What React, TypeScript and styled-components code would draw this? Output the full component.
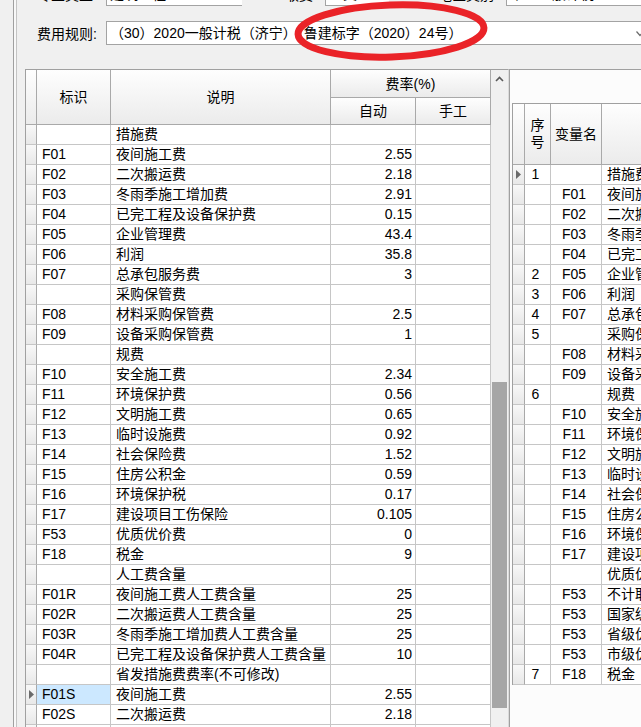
import React from "react";
import styled, { createGlobalStyle } from "styled-components";

const GlobalStyle = createGlobalStyle`
  html, body {
    margin: 0;
    padding: 0;
    background: #f0f0f0;
    overflow: hidden;
  }
  body {
    font-family: "Liberation Sans", "Noto Sans CJK SC", sans-serif;
    font-size: 14px;
    color: #000;
  }
`;

type FeeRow = { id: string; name: string; auto: string; selected?: boolean };
type VarRow = { no: string; code: string; desc: string; current?: boolean };

const feeRows: FeeRow[] = [
  { id: "", name: "措施费", auto: "" },
  { id: "F01", name: "夜间施工费", auto: "2.55" },
  { id: "F02", name: "二次搬运费", auto: "2.18" },
  { id: "F03", name: "冬雨季施工增加费", auto: "2.91" },
  { id: "F04", name: "已完工程及设备保护费", auto: "0.15" },
  { id: "F05", name: "企业管理费", auto: "43.4" },
  { id: "F06", name: "利润", auto: "35.8" },
  { id: "F07", name: "总承包服务费", auto: "3" },
  { id: "", name: "采购保管费", auto: "" },
  { id: "F08", name: "材料采购保管费", auto: "2.5" },
  { id: "F09", name: "设备采购保管费", auto: "1" },
  { id: "", name: "规费", auto: "" },
  { id: "F10", name: "安全施工费", auto: "2.34" },
  { id: "F11", name: "环境保护费", auto: "0.56" },
  { id: "F12", name: "文明施工费", auto: "0.65" },
  { id: "F13", name: "临时设施费", auto: "0.92" },
  { id: "F14", name: "社会保险费", auto: "1.52" },
  { id: "F15", name: "住房公积金", auto: "0.59" },
  { id: "F16", name: "环境保护税", auto: "0.17" },
  { id: "F17", name: "建设项目工伤保险", auto: "0.105" },
  { id: "F53", name: "优质优价费", auto: "0" },
  { id: "F18", name: "税金", auto: "9" },
  { id: "", name: "人工费含量", auto: "" },
  { id: "F01R", name: "夜间施工费人工费含量", auto: "25" },
  { id: "F02R", name: "二次搬运费人工费含量", auto: "25" },
  { id: "F03R", name: "冬雨季施工增加费人工费含量", auto: "25" },
  { id: "F04R", name: "已完工程及设备保护费人工费含量", auto: "10" },
  { id: "", name: "省发措施费费率(不可修改)", auto: "" },
  { id: "F01S", name: "夜间施工费", auto: "2.55", selected: true },
  { id: "F02S", name: "二次搬运费", auto: "2.18" },
  { id: "F03S", name: "冬雨季施工增加费", auto: "2.91" },
];

const varRows: VarRow[] = [
  { no: "1", code: "", desc: "措施费", current: true },
  { no: "", code: "F01", desc: "夜间施工费" },
  { no: "", code: "F02", desc: "二次搬运费" },
  { no: "", code: "F03", desc: "冬雨季施工增加费" },
  { no: "", code: "F04", desc: "已完工程及设备保护费" },
  { no: "2", code: "F05", desc: "企业管理费" },
  { no: "3", code: "F06", desc: "利润" },
  { no: "4", code: "F07", desc: "总承包服务费" },
  { no: "5", code: "", desc: "采购保管费" },
  { no: "", code: "F08", desc: "材料采购保管费" },
  { no: "", code: "F09", desc: "设备采购保管费" },
  { no: "6", code: "", desc: "规费" },
  { no: "", code: "F10", desc: "安全施工费" },
  { no: "", code: "F11", desc: "环境保护费" },
  { no: "", code: "F12", desc: "文明施工费" },
  { no: "", code: "F13", desc: "临时设施费" },
  { no: "", code: "F14", desc: "社会保险费" },
  { no: "", code: "F15", desc: "住房公积金" },
  { no: "", code: "F16", desc: "环境保护税" },
  { no: "", code: "F17", desc: "建设项目工伤保险" },
  { no: "", code: "", desc: "优质优价费" },
  { no: "", code: "F53", desc: "不计取优质优价" },
  { no: "", code: "F53", desc: "国家级优质工程" },
  { no: "", code: "F53", desc: "省级优质工程" },
  { no: "", code: "F53", desc: "市级优质工程" },
  { no: "7", code: "F18", desc: "税金" },
];

const Window = styled.div`
  position: relative;
  width: 641px;
  height: 727px;
  overflow: hidden;
  display: flex;
  background: #f0f0f0;
`;

const Gutter = styled.div`
  flex: none;
  width: 13px;
  border-right: 1px solid #a0a0a0;
`;

const Edge = styled.div`
  flex: none;
  width: 2px;
  background: #f8f8f8;
  border-right: 1px solid #c4c4c4;
`;

const Main = styled.div`
  flex: 1;
  min-width: 0;
  display: flex;
  flex-direction: column;
`;

const Form = styled.div`
  flex: none;
  height: 87px;
  margin-top: -18px;
  display: flex;
  flex-direction: column;
  gap: 15px;
`;

const FormRow = styled.div`
  display: flex;
  align-items: center;
  height: 24px;
`;

const Label = styled.div<{ $width: number; $right?: boolean }>`
  flex: none;
  width: ${(p) => p.$width}px;
  box-sizing: border-box;
  padding: ${(p) => (p.$right ? "0 8px 0 0" : "0 0 0 20px")};
  text-align: ${(p) => (p.$right ? "right" : "left")};
  white-space: nowrap;
`;

const Field = styled.div<{ $width?: number }>`
  box-sizing: border-box;
  position: relative;
  ${(p) => (p.$width ? `width: ${p.$width}px; flex: none;` : "flex: 1;")}
  height: 24px;
  line-height: 22px;
  padding-left: 3px;
  background: #fff;
  border: 1px solid #a3a3a3;
  border-right: none;
  white-space: nowrap;
  overflow: hidden;
`;

const Chevron = styled.svg`
  position: absolute;
  right: -3px;
  top: 9px;
`;

const Body = styled.div`
  flex: 1;
  display: flex;
  min-height: 0;
`;

const Spacer = styled.div`
  flex: none;
  width: 8px;
`;

const GridBox = styled.div`
  flex: none;
  display: flex;
  border-top: 1px solid #a0a0a0;
  border-left: 1px solid #a0a0a0;
  border-right: 1px solid #dadada;
  background: #fff;
`;

const FeeTable = styled.div`
  display: grid;
  grid-template-columns: 11px 74px 220px 85px 75px;
  grid-template-rows: 28px 27px;
  grid-auto-rows: 20px;
  align-content: start;
`;

const HeadCell = styled.div<{ $rows?: number; $cols?: number }>`
  box-sizing: border-box;
  grid-row: span ${(p) => p.$rows ?? 1};
  grid-column: span ${(p) => p.$cols ?? 1};
  display: flex;
  align-items: center;
  justify-content: center;
  text-align: center;
  line-height: 16px;
  background: linear-gradient(#fefefe, #ebebeb);
  border-right: 1px solid #a9a9a9;
  border-bottom: 1px solid #a9a9a9;
  white-space: nowrap;
  overflow: hidden;
`;

const Indicator = styled.div`
  box-sizing: border-box;
  display: flex;
  align-items: center;
  justify-content: center;
  background: linear-gradient(#f8f8f8, #e8e8e8);
  border-right: 1px solid #a9a9a9;
  border-bottom: 1px solid #c6c6c6;
`;

const Cell = styled.div<{ $align?: "left" | "right" | "center"; $selected?: boolean }>`
  box-sizing: border-box;
  padding: 0 ${(p) => (p.$align === "right" ? "3px" : "4px")} 0
    ${(p) => (p.$align === "left" || !p.$align ? "5px" : "0")};
  text-align: ${(p) => p.$align ?? "left"};
  line-height: 19px;
  background: ${(p) => (p.$selected ? "#cce8ff" : "#fff")};
  border-right: 1px solid #c6c6c6;
  border-bottom: 1px solid #c6c6c6;
  white-space: nowrap;
  overflow: hidden;
`;

const ScrollBar = styled.div`
  flex: none;
  width: 17px;
  display: flex;
  flex-direction: column;
  background: #f0f0f0;
`;

const ArrowButton = styled.div`
  height: 17px;
  display: flex;
  align-items: center;
  justify-content: center;
`;

const Thumb = styled.div<{ $top: number; $height: number }>`
  margin: ${(p) => p.$top}px 1px 0 1px;
  height: ${(p) => p.$height}px;
  background: #a6a6a6;
`;

const RightPanel = styled.div`
  flex: 1;
  min-width: 0;
  overflow: hidden;
  background: #fcfcfc;
  border-top: 1px solid #a0a0a0;
  border-left: 1px solid #a0a0a0;
  padding: 33px 0 0 2px;
`;

const VarTable = styled.div`
  display: grid;
  grid-template-columns: 12px 26px 51px 160px;
  grid-template-rows: 61px;
  grid-auto-rows: 20px;
  width: 249px;
  border-top: 1px solid #a0a0a0;
  border-left: 1px solid #a0a0a0;
  background: #fff;
`;

const TwoLine = styled.span`
  display: block;
  width: 14px;
  line-height: 17px;
  white-space: normal;
  word-break: break-all;
`;

function Pointer() {
  return (
    <svg width="5" height="9" viewBox="0 0 5 9">
      <polygon points="0,0 5,4.5 0,9" fill="#6a6a6a" />
    </svg>
  );
}

function FeeGrid() {
  return (
    <FeeTable>
      <HeadCell $rows={2} />
      <HeadCell $rows={2}>标识</HeadCell>
      <HeadCell $rows={2}>说明</HeadCell>
      <HeadCell $cols={2}>费率(%)</HeadCell>
      <HeadCell>自动</HeadCell>
      <HeadCell>手工</HeadCell>
      {feeRows.map((r, i) => (
        <React.Fragment key={i}>
          <Indicator>{r.selected && <Pointer />}</Indicator>
          <Cell $selected={r.selected}>{r.id}</Cell>
          <Cell>{r.name}</Cell>
          <Cell $align="right">{r.auto}</Cell>
          <Cell $align="right" />
        </React.Fragment>
      ))}
    </FeeTable>
  );
}

function VarGrid() {
  return (
    <VarTable>
      <HeadCell />
      <HeadCell>
        <TwoLine>序号</TwoLine>
      </HeadCell>
      <HeadCell>变量名</HeadCell>
      <HeadCell />
      {varRows.map((r, i) => (
        <React.Fragment key={i}>
          <Indicator>{r.current && <Pointer />}</Indicator>
          <Cell $align="center">{r.no}</Cell>
          <Cell $align="center">{r.code}</Cell>
          <Cell>{r.desc}</Cell>
        </React.Fragment>
      ))}
    </VarTable>
  );
}

export default function App() {
  return (
    <Window>
      <GlobalStyle />
      <Gutter />
      <Edge />
      <Main>
        <Form>
          <FormRow>
            <Label $width={89}>专业类型:</Label>
            <Field $width={136}>建筑工程</Field>
            <Label $width={83} $right>
              取费:
            </Label>
            <Field $width={64}>一类</Field>
            <Label $width={117} $right>
              地区类别:
            </Label>
            <Field>市区一般计税</Field>
          </FormRow>
          <FormRow>
            <Label $width={89}>费用规则:</Label>
            <Field>
              （30）2020一般计税（济宁）（鲁建标字（2020）24号）
              <Chevron width="8" height="6" viewBox="0 0 8 6">
                <polyline points="0.5,0.5 4,4.5 7.5,0.5" fill="none" stroke="#6b6b6b" strokeWidth="1.2" />
              </Chevron>
            </Field>
          </FormRow>
        </Form>
        <Body>
          <Spacer />
          <GridBox>
            <FeeGrid />
            <ScrollBar>
              <ArrowButton>
                <svg width="9" height="6" viewBox="0 0 9 6">
                  <polyline points="1,5 4.5,1.5 8,5" fill="none" stroke="#5a5a5a" strokeWidth="1.6" />
                </svg>
              </ArrowButton>
              <Thumb $top={295} $height={326} />
            </ScrollBar>
          </GridBox>
          <RightPanel>
            <VarGrid />
          </RightPanel>
        </Body>
      </Main>
      <svg
        width="641"
        height="727"
        style={{ position: "absolute", left: 0, top: 0, pointerEvents: "none" }}
      >
        <ellipse
          cx="391"
          cy="31"
          rx="93"
          ry="26"
          fill="none"
          stroke="#ea2328"
          strokeWidth="7"
          transform="rotate(-2 391 31)"
        />
      </svg>
    </Window>
  );
}
